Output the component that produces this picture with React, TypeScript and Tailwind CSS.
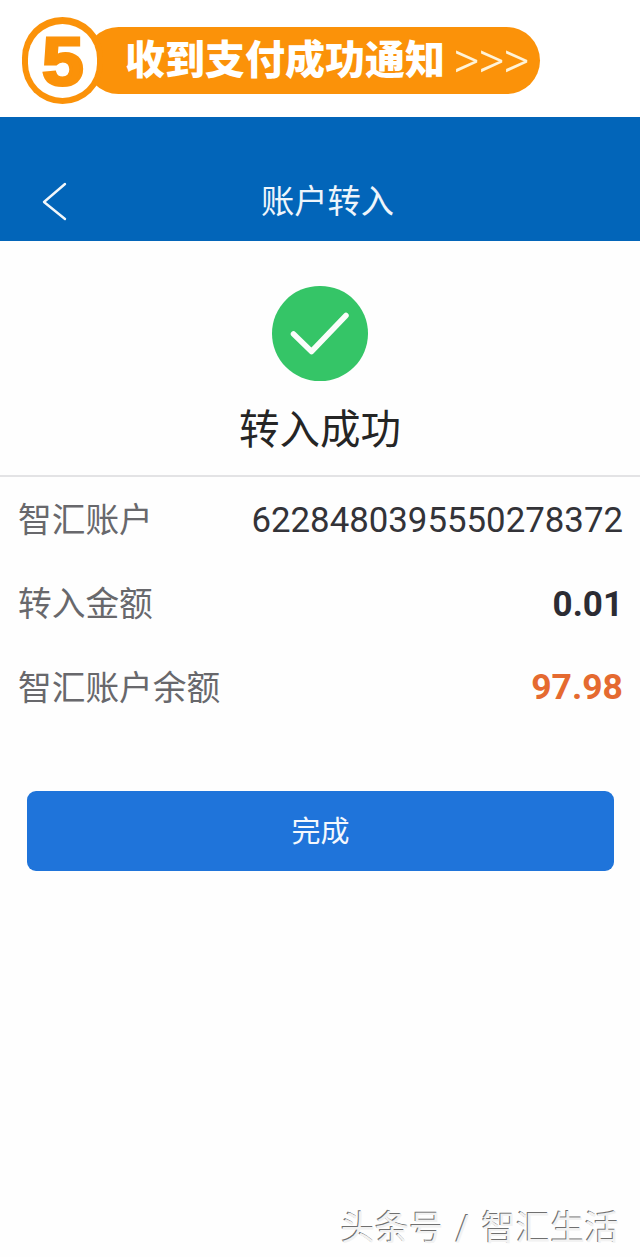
const cjk = "font-['Roboto','Noto_Sans_CJK_SC',sans-serif]";

const rows = [
  { label: "智汇账户", value: "6228480395550278372", valueClass: "text-[34.8px] text-[#333338]" },
  { label: "转入金额", value: "0.01", valueClass: "text-[35px] font-bold text-[#2c2c33]" },
  { label: "智汇账户余额", value: "97.98", valueClass: "text-[35.5px] font-bold text-[#e56a30]" },
];

export default function App() {
  return (
    <div className={`${cjk} flex h-[1257px] w-[640px] flex-col overflow-hidden bg-[#fefefe]`}>
      {/* step banner */}
      <div className="relative h-[117px] shrink-0 bg-white pl-[85px] pt-[27px]">
        <div className="flex h-[67px] w-[455px] items-center rounded-full bg-[#fb9209] pl-[40px] text-white">
          <span className="text-[40px] font-black leading-none">收到支付成功通知</span>
          <span className="ml-[8px] text-[51px] font-light leading-none tracking-[-1.5px] text-[#fff3d8]">&gt;&gt;&gt;</span>
        </div>
        <div className="absolute left-[22px] top-[17px] flex h-[87px] w-[81px] items-center justify-center rounded-full bg-[#fb9209]">
          <div className="flex h-[74px] w-[69px] items-center justify-center rounded-full bg-white">
            <span className="scale-x-110 font-['Liberation_Sans',sans-serif] text-[68px] font-bold leading-none text-[#fb9209] [-webkit-text-stroke:3px_#fb9209]">5</span>
          </div>
        </div>
      </div>

      {/* nav bar */}
      <div className="flex h-[124px] shrink-0 items-end bg-[#0265b9] pb-[14px]">
        <div className="relative flex h-[50px] w-full items-center justify-center pl-[15px]">
          <svg className="absolute left-[41px] top-[5px]" width="28" height="40" viewBox="0 0 28 40" fill="none">
            <path d="M24 2 L3 20 L24 37" stroke="#f2f7fb" strokeWidth="2.4" strokeLinecap="round" strokeLinejoin="round" />
          </svg>
          <span className="text-[33.3px] leading-none text-[#eef5fb]">账户转入</span>
        </div>
      </div>

      {/* result */}
      <div className="flex h-[236px] shrink-0 flex-col items-center border-b-2 border-[#e3e3e5] pt-[45px]">
        <div className="flex h-[95px] w-[96px] items-center justify-center rounded-full bg-[#35c567]">
          <svg width="60" height="44" viewBox="0 0 60 44" fill="none">
            <path d="M3.5 22 L21.5 39.5 L56 3.5" stroke="#fbfdfb" strokeWidth="5.5" strokeLinecap="round" strokeLinejoin="round" />
          </svg>
        </div>
        <div className="mt-[25px] text-[40.5px] leading-[48px] text-[#252525]">转入成功</div>
      </div>

      {/* detail rows */}
      <div className="flex flex-col gap-[34px] pl-[18px] pr-[17px] pt-[18px]">
        {rows.map((row) => (
          <div key={row.label} className="flex h-[50px] items-center justify-between">
            <span className="pt-[2px] text-[33.7px] leading-none text-[#68686c]">{row.label}</span>
            <span className={`${row.valueClass} leading-none`}>{row.value}</span>
          </div>
        ))}
      </div>

      <button className="ml-[27px] mt-[78px] flex h-[80px] w-[587px] shrink-0 items-center justify-center rounded-[9px] bg-[#1f74da] pt-[4px] text-[29px] text-[#f4f8fd]">
        完成
      </button>

      {/* watermark */}
      <div className="mt-auto flex justify-end pb-[9px] pr-[21px] text-[34.3px] leading-[40px] text-[#f2f2f2] [word-spacing:3.5px] [text-shadow:-1px_-1px_0_#6f6f6f]">
        头条号 / 智汇生活
      </div>
    </div>
  );
}
